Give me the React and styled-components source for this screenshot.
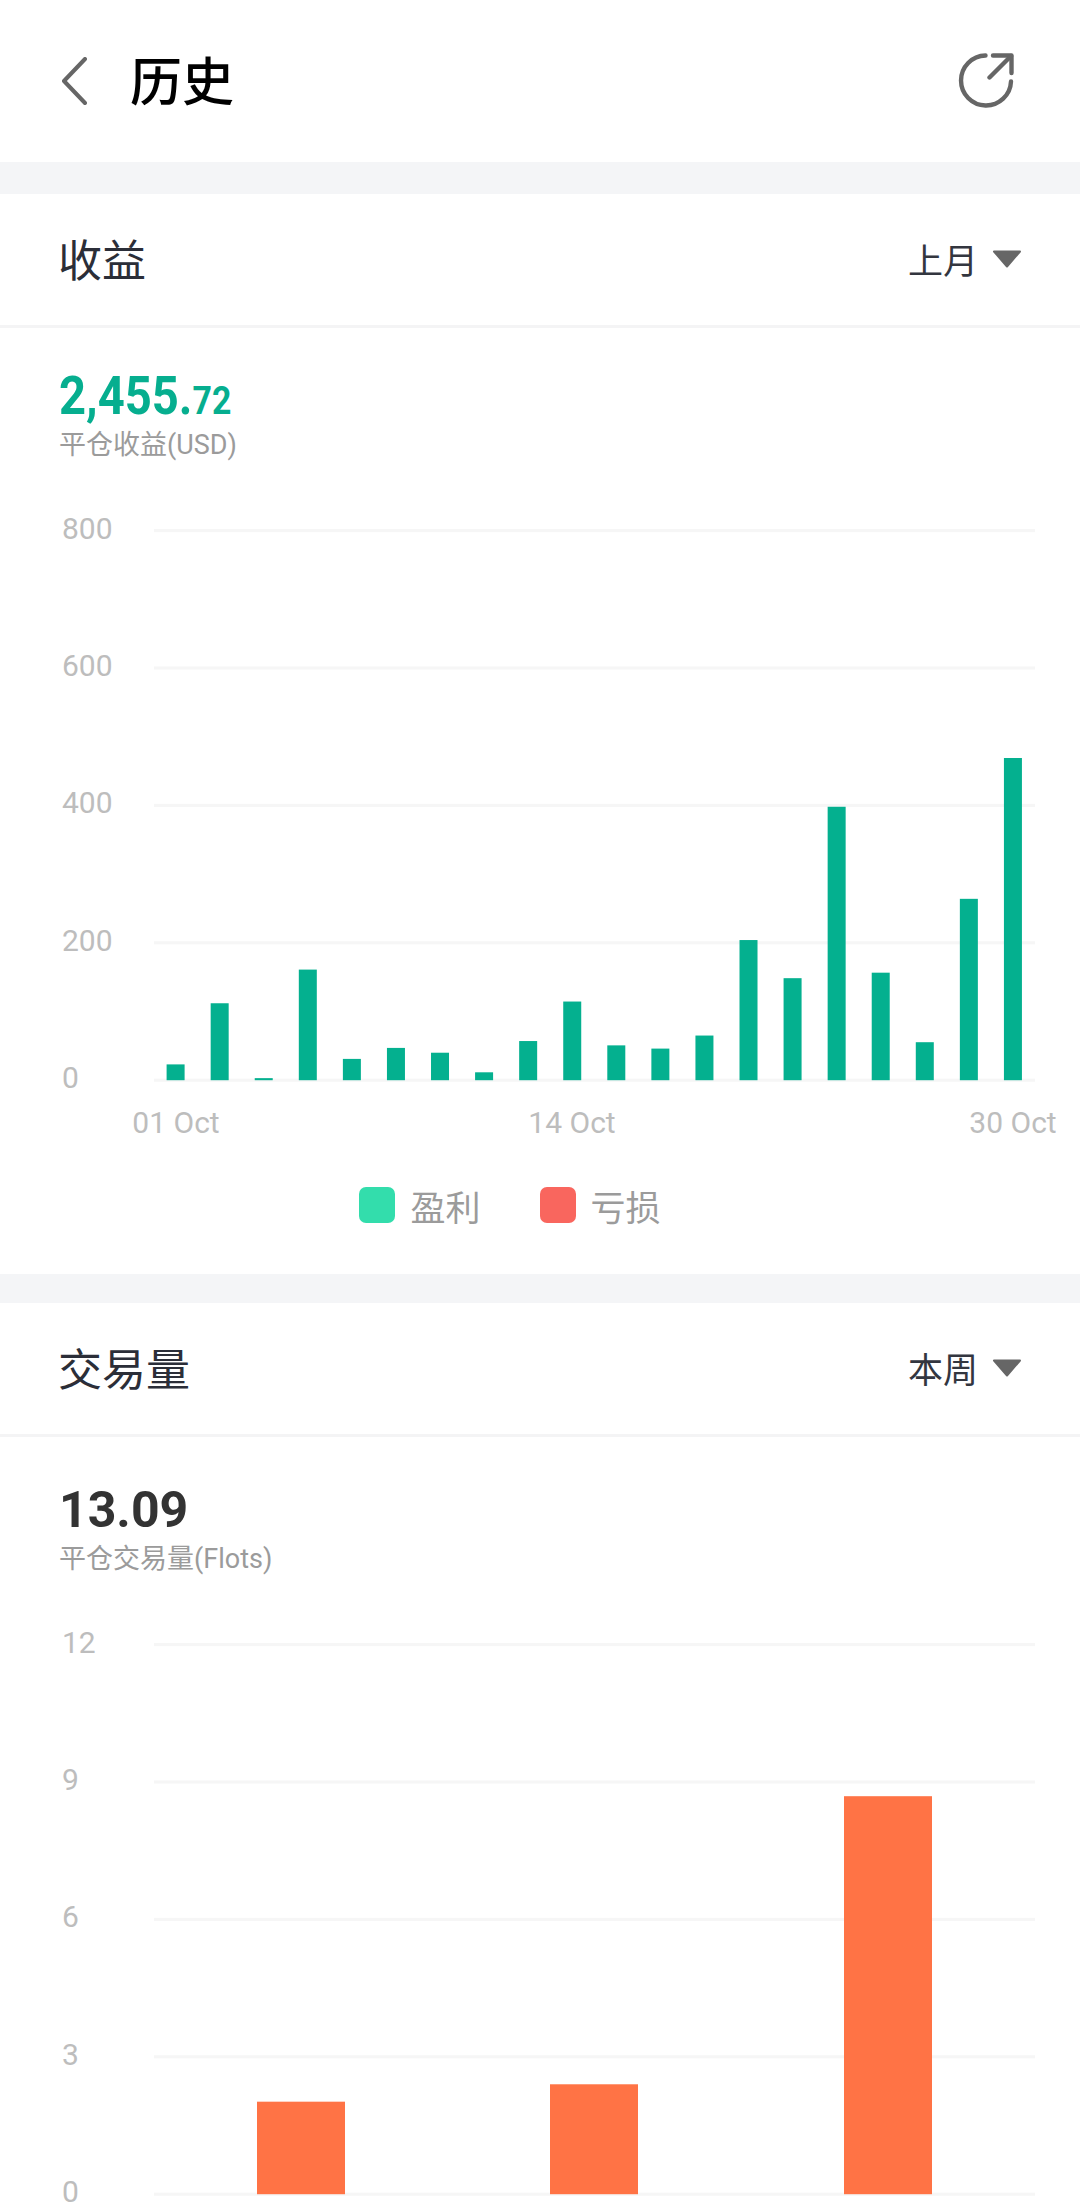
import React from "react";
import styled, { createGlobalStyle } from "styled-components";

const GlobalStyle = createGlobalStyle`
  html, body {
    margin: 0;
    padding: 0;
    background: #fff;
  }
  body {
    font-family: Roboto, "Noto Sans CJK SC", sans-serif;
  }
`;

const Page = styled.div`
  width: 1080px;
  height: 2202px;
  overflow: hidden;
  background: #fff;
`;

const TopBar = styled.header`
  height: 162px;
  display: flex;
  align-items: center;
  padding: 0 66px 0 61px;
  box-sizing: border-box;
`;

const PageTitle = styled.h1`
  margin: 0 0 4px 43px;
  flex: 1;
  font-size: 52px;
  line-height: 1;
  font-weight: 500;
  color: #000;
  font-family: "Noto Sans CJK SC", sans-serif;
`;

const Gap = styled.div`
  height: ${(p) => p.$h}px;
  background: #f4f5f7;
`;

const SectionHead = styled.div`
  height: 131px;
  border-bottom: 3px solid #f4f4f5;
  display: flex;
  align-items: center;
  justify-content: space-between;
  padding: 0 58px 0 58px;
`;

const SectionTitle = styled.h2`
  margin: 0 0 4px;
  font-size: 44px;
  line-height: 1;
  font-weight: 400;
  color: #2b2e38;
  font-family: "Noto Sans CJK SC", sans-serif;
`;

const Period = styled.div`
  display: flex;
  align-items: center;
  gap: 14px;
  margin-bottom: 2px;
  font-size: 35px;
  line-height: 1;
  color: #33363f;
  font-family: "Noto Sans CJK SC", sans-serif;
`;

const Summary = styled.div`
  height: ${(p) => p.$h}px;
  padding: ${(p) => p.$top}px 0 0 59px;
  box-sizing: border-box;
`;

const Amount = styled.div`
  font-size: ${(p) => p.$size}px;
  line-height: 1;
  font-weight: 700;
  color: ${(p) => p.$color};
  transform: scaleX(${(p) => p.$squeeze || 1});
  transform-origin: left center;
`;

const Cents = styled.span`
  font-size: 38px;
`;

const SubLabel = styled.div`
  margin-top: ${(p) => p.$gap}px;
  font-size: 27px;
  line-height: 1.1;
  color: #9b9b9b;
`;

const ChartSvg = styled.svg`
  display: block;
`;

const AxisText = styled.text`
  font-family: Roboto, sans-serif;
  font-size: 30px;
  fill: #bdbdbd;
`;

const Legend = styled.div`
  display: flex;
  justify-content: center;
  gap: 59px;
  padding-right: 60px;
  height: 87px;
`;

const LegendItem = styled.div`
  display: flex;
  align-items: center;
  gap: 15px;
  height: 36px;
  font-size: 35px;
  color: #9b9b9b;
  font-family: "Noto Sans CJK SC", sans-serif;
`;

const Swatch = styled.i`
  width: 36px;
  height: 36px;
  border-radius: 7px;
  background: ${(p) => p.$color};
`;

const BackIcon = () => (
  <svg width="26" height="48" viewBox="0 0 26 48" fill="none">
    <path d="M24 2 L3 24 L24 46" stroke="#666" strokeWidth="4" strokeLinecap="round" strokeLinejoin="round" />
  </svg>
);

const ShareIcon = () => (
  <svg width="56" height="56" viewBox="0 0 56 56" fill="none" stroke="#666" strokeWidth="4.4" strokeLinecap="round" strokeLinejoin="round">
    <path d="M27.5 2.5 A25 25 0 1 0 53 28.5" />
    <path d="M35 2.5 H53.5 V20" />
    <path d="M53 3 L31.5 24.5" />
  </svg>
);

const Caret = () => (
  <svg width="30" height="18" viewBox="0 0 30 18">
    <path d="M2 1.5 H28 L15 16.5 Z" fill="#666" stroke="#666" strokeWidth="2" strokeLinejoin="round" />
  </svg>
);

const PLOT_LEFT = 154;
const PLOT_RIGHT = 1035;
const PLOT_HEIGHT = 549.6;

// gridTop is where the highest line sits inside the svg
function BarChart({ height, gridTop, ticks, max, bars, barWidth, color, xLabels }) {
  const base = gridTop + PLOT_HEIGHT;
  return (
    <ChartSvg width="1080" height={height} viewBox={`0 0 1080 ${height}`}>
      {ticks.map((t, i) => {
        const y = gridTop + (PLOT_HEIGHT * i) / (ticks.length - 1);
        return (
          <g key={t}>
            <rect x={PLOT_LEFT} y={y - 1.5} width={PLOT_RIGHT - PLOT_LEFT} height="3" fill="#f6f6f6" />
            <AxisText x="62" y={y + 8}>{t}</AxisText>
          </g>
        );
      })}
      {bars.map((b) => {
        const h = (b.value / max) * PLOT_HEIGHT;
        return <rect key={b.x} x={b.x - barWidth / 2} y={base - h} width={barWidth} height={h} fill={color} />;
      })}
      {xLabels.map((l) => (
        <AxisText key={l.text} x={l.x} y={base + 53} textAnchor="middle">{l.text}</AxisText>
      ))}
    </ChartSvg>
  );
}

const profit = [23, 112, 3, 161, 31, 47, 40, 11.5, 57, 114.5, 50.7, 46, 65, 204, 148.5, 398, 156.5, 55.3, 264, 469];
const profitBars = profit.map((value, i) => ({ value, x: 175.6 + i * 44.07 }));
const volumeBars = [
  { value: 2.02, x: 301 },
  { value: 2.4, x: 594 },
  { value: 8.69, x: 888 },
];

export default function App() {
  return (
    <Page>
      <GlobalStyle />
      <TopBar>
        <BackIcon />
        <PageTitle>历史</PageTitle>
        <ShareIcon />
      </TopBar>
      <Gap $h={32} />

      <SectionHead>
        <SectionTitle>收益</SectionTitle>
        <Period>上月<Caret /></Period>
      </SectionHead>
      <Summary $h={152} $top={42}>
        <Amount $size={53} $color="#06ae8f" $squeeze={0.89}>2,455.<Cents>72</Cents></Amount>
        <SubLabel $gap={8}>平仓收益(USD)</SubLabel>
      </Summary>
      <BarChart
        height={707}
        gridTop={50.6}
        ticks={["800", "600", "400", "200", "0"]}
        max={800}
        bars={profitBars}
        barWidth={18}
        color="#04b08f"
        xLabels={[
          { text: "01 Oct", x: 176 },
          { text: "14 Oct", x: 572 },
          { text: "30 Oct", x: 1013 },
        ]}
      />
      <Legend>
        <LegendItem><Swatch $color="#33ddac" />盈利</LegendItem>
        <LegendItem><Swatch $color="#f9665e" />亏损</LegendItem>
      </Legend>
      <Gap $h={29} />

      <SectionHead>
        <SectionTitle>交易量</SectionTitle>
        <Period>本周<Caret /></Period>
      </SectionHead>
      <Summary $h={157} $top={48}>
        <Amount $size={50} $color="#333">13.09</Amount>
        <SubLabel $gap={10}>平仓交易量(Flots)</SubLabel>
      </Summary>
      <BarChart
        height={608}
        gridTop={50.6}
        ticks={["12", "9", "6", "3", "0"]}
        max={12}
        bars={volumeBars}
        barWidth={88}
        color="#ff7345"
        xLabels={[]}
      />
    </Page>
  );
}
